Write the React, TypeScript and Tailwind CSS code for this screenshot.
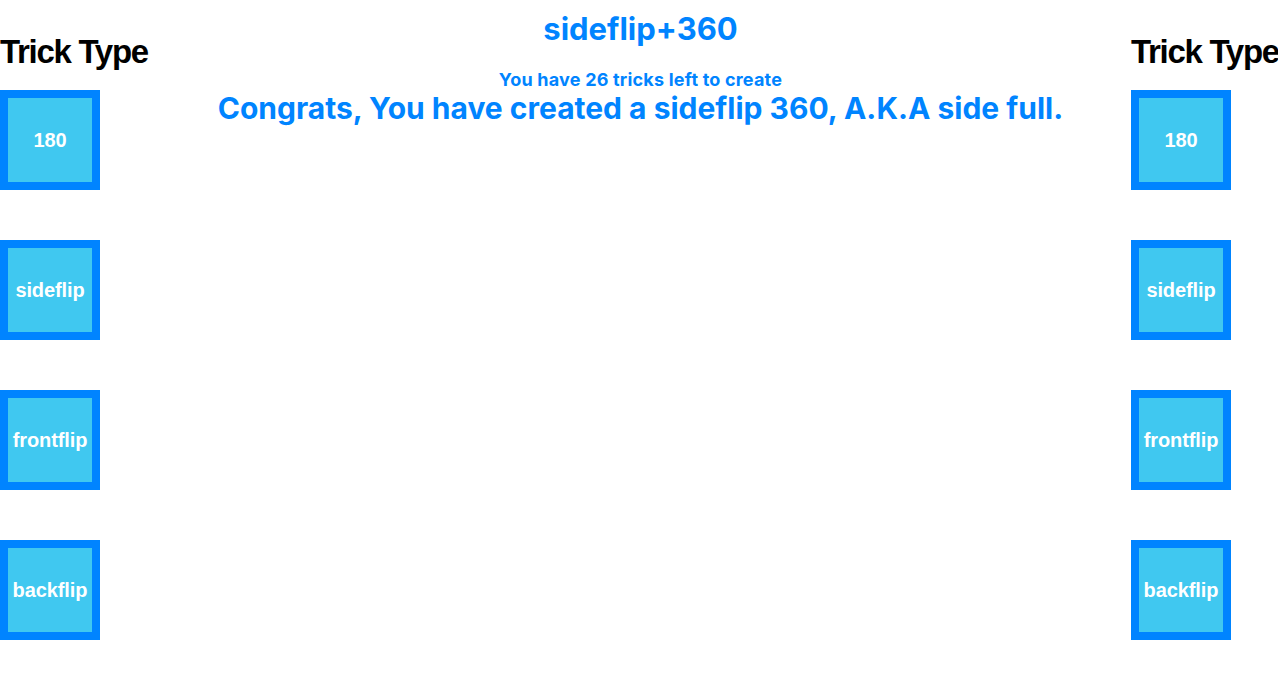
import React from "react";

const tricks = ["180", "sideflip", "frontflip", "backflip"];

function Column() {
  return (
    <div className="flex flex-col w-[150px] shrink-0">
      <h1
        className="text-[33px] font-bold leading-[40px] pt-[32px] mb-[18px] tracking-[-1.3px] text-black whitespace-nowrap"
        style={{ fontFamily: '"Liberation Sans", Arial, sans-serif' }}
      >
        Trick Type
      </h1>
      <div className="flex flex-col gap-[50px]">
        {tricks.map((t) => (
          <div
            key={t}
            className="w-[100px] h-[100px] border-[8px] border-[#0084ff] bg-[#40c8f0] flex items-center justify-center"
          >
            <span
              className="text-white text-[20px] font-bold whitespace-nowrap tracking-[-0.1px]"
              style={{ fontFamily: '"Liberation Sans", Arial, sans-serif' }}
            >
              {t}
            </span>
          </div>
        ))}
      </div>
    </div>
  );
}

export default function App() {
  return (
    <div className="w-[1278px] h-[677px] bg-white flex justify-between overflow-hidden">
      <Column />
      <div
        className="flex-1 flex flex-col items-center text-[#0084ff] font-bold"
        style={{ fontFamily: 'Inter, "Noto Sans", sans-serif' }}
      >
        <div className="text-[31px] leading-[36px] mt-[11px] whitespace-nowrap">sideflip+360</div>
        <div className="text-[18px] leading-[22px] mt-[22px] tracking-[0.2px] whitespace-nowrap">You have 26 tricks left to create</div>
        <div className="text-[30px] leading-[36px] -mt-[1px] whitespace-nowrap">
          Congrats, You have created a sideflip 360, A.K.A side full.
        </div>
      </div>
      <div className="w-[147px] shrink-0 flex">
        <Column />
      </div>
    </div>
  );
}
